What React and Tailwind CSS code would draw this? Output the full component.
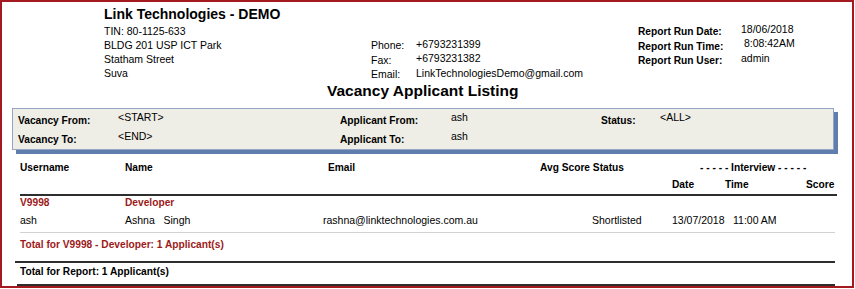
import React from 'react';

const reportInfo = [
  ['Report Run Date:', '18/06/2018'],
  ['Report Run Time:', ' 8:08:42AM'],
  ['Report Run User:', 'admin'],
];

const contactInfo = [
  ['Phone:', '+6793231399'],
  ['Fax:', '+6793231382'],
  ['Email:', 'LinkTechnologiesDemo@gmail.com'],
];

function App() {
  return (
    <div className="w-[855px] h-[289px] bg-white text-black" style={{ fontFamily: '"Liberation Sans", Arial, sans-serif' }}>
      <div className="w-[854px] h-[288px] border-2 border-[#a3191f] bg-white overflow-hidden">
        {/* company header */}
        <div className="flex h-[78px]">
          <div className="ml-[102px] w-[267px] flex flex-col">
            <div className="mt-[4px] text-[14px] leading-[16px] font-bold">Link Technologies - DEMO</div>
            <div className="mt-[2px] text-[10.5px] leading-[14px]">
              <div>TIN: 80-1125-633</div>
              <div>BLDG 201 USP ICT Park</div>
              <div>Statham Street</div>
              <div>Suva</div>
            </div>
          </div>
          <div className="w-[267px] mt-[35.25px] text-[10.5px]">
            {contactInfo.map(([label, value]) => (
              <div key={label} className="flex items-center h-[14.5px]">
                <span className="w-[45px] mt-[3px]">{label}</span>
                <span>{value}</span>
              </div>
            ))}
          </div>
          <div className="mt-[22.5px]">
            {reportInfo.map(([label, value]) => (
              <div key={label} className="flex items-center h-[14.5px]">
                <span className="w-[103px] text-[10.2px] font-bold">{label}</span>
                <span className="mb-[4px] text-[10.5px] whitespace-pre">{value}</span>
              </div>
            ))}
          </div>
        </div>

        <div className="ml-[325px] mt-[2px] text-[15.5px] leading-[18px] font-bold">Vacancy Applicant Listing</div>

        {/* filter box */}
        <div className="ml-[10px] mt-[8px] w-[822px] h-[42px] border border-[#95a6c4] bg-[#eeede6] shadow-[4px_4px_0_#5f7ead] pl-[5px] pt-[1.5px]">
          <div className="flex items-center h-[19.5px]">
            <span className="w-[100px] text-[10.2px] font-bold">Vacancy From:</span>
            <span className="w-[222px] mb-[5px] text-[10.5px]">&lt;START&gt;</span>
            <span className="w-[111px] text-[10.2px] font-bold">Applicant From:</span>
            <span className="w-[150px] mb-[5px] text-[10.5px]">ash</span>
            <span className="w-[59px] text-[10.2px] font-bold">Status:</span>
            <span className="mb-[5px] text-[10.5px]">&lt;ALL&gt;</span>
          </div>
          <div className="flex items-center h-[19.5px]">
            <span className="w-[100px] text-[10.2px] font-bold">Vacancy To:</span>
            <span className="w-[222px] mb-[5px] text-[10.5px]">&lt;END&gt;</span>
            <span className="w-[111px] text-[10.2px] font-bold">Applicant To:</span>
            <span className="mb-[5px] text-[10.5px]">ash</span>
          </div>
        </div>

        {/* column headers */}
        <div className="ml-[18px] mt-[10.5px] flex text-[10.2px] leading-[14px] font-bold">
          <span className="w-[105px]">Username</span>
          <span className="w-[203px]">Name</span>
          <span className="w-[212px]">Email</span>
          <span className="w-[160px]">Avg Score Status</span>
          <span className="whitespace-pre">- - - - - Interview - - - - -</span>
        </div>
        <div className="ml-[670px] mt-[3.5px] flex text-[10.2px] leading-[14px] font-bold">
          <span className="w-[53px]">Date</span>
          <span className="w-[81px]">Time</span>
          <span>Score</span>
        </div>
        <div className="ml-[18px] mt-[2px] w-[817px] h-[2px] bg-[#2e2e2e]" />

        {/* vacancy group */}
        <div className="ml-[18px] flex text-[10.2px] leading-[14px] font-bold text-[#9c1a1a]">
          <span className="w-[105px]">V9998</span>
          <span>Developer</span>
        </div>
        <div className="ml-[18px] mt-[3px] flex text-[10.5px] leading-[14px]">
          <span className="w-[105px]">ash</span>
          <span className="w-[198px] whitespace-pre">Ashna   Singh</span>
          <span className="w-[269px]">rashna@linktechnologies.com.au</span>
          <span className="w-[80px]">Shortlisted</span>
          <span className="w-[61px]">13/07/2018</span>
          <span>11:00 AM</span>
        </div>
        <div className="ml-[18px] mt-[5px] w-[815px] h-px bg-[#d2d2d2]" />
        <div className="ml-[18px] mt-[5px] text-[10.2px] leading-[14px] font-bold text-[#9c1a1a]">
          Total for V9998 - Developer: 1 Applicant(s)
        </div>

        <div className="ml-[13px] mt-[9px] w-[820px] h-[2px] bg-[#2e2e2e]" />
        <div className="ml-[18px] mt-[2px] text-[10.2px] leading-[14px] font-bold">Total for Report: 1 Applicant(s)</div>
        <div className="ml-[15px] mt-[5px] w-[818px] h-[2px] bg-[#2e2e2e]" />
      </div>
    </div>
  );
}

export default App;
